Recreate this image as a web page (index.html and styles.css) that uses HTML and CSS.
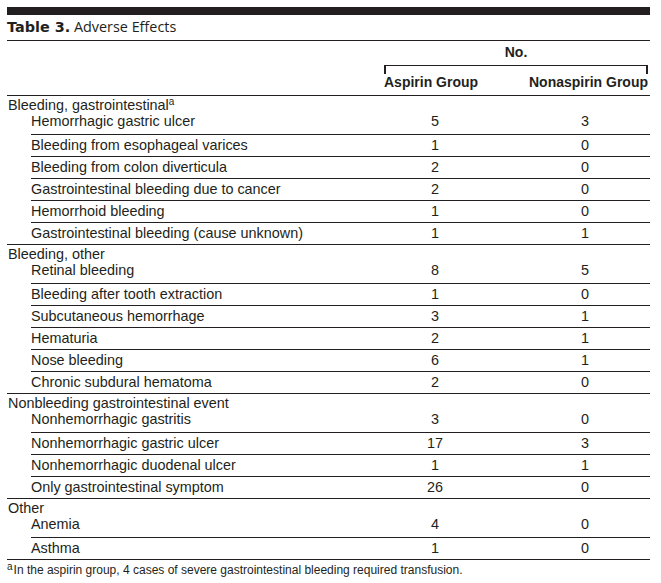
FILE: index.html
```html
<!DOCTYPE html>
<html>
<head>
<meta charset="utf-8">
<link rel="stylesheet" href="styles.css">
</head>
<body>
<div class="page">
  <div class="bar"></div>
  <div class="title"><span class="tnum">Table 3.</span> Adverse Effects</div>
  <div class="thead">
    <div class="no">No.</div>
    <div class="bracket"></div>
    <div class="h1">Aspirin Group</div>
    <div class="h2">Nonaspirin Group</div>
  </div>

  <div class="group">
    <div class="cat">Bleeding, gastrointestinal<sup>a</sup></div>
    <div class="row first"><span>Hemorrhagic gastric ulcer</span><span class="n">5</span><span class="n">3</span></div>
    <div class="row"><span>Bleeding from esophageal varices</span><span class="n">1</span><span class="n">0</span></div>
    <div class="row"><span>Bleeding from colon diverticula</span><span class="n">2</span><span class="n">0</span></div>
    <div class="row"><span>Gastrointestinal bleeding due to cancer</span><span class="n">2</span><span class="n">0</span></div>
    <div class="row"><span>Hemorrhoid bleeding</span><span class="n">1</span><span class="n">0</span></div>
    <div class="row"><span>Gastrointestinal bleeding (cause unknown)</span><span class="n">1</span><span class="n">1</span></div>
  </div>

  <div class="group">
    <div class="cat">Bleeding, other</div>
    <div class="row first"><span>Retinal bleeding</span><span class="n">8</span><span class="n">5</span></div>
    <div class="row"><span>Bleeding after tooth extraction</span><span class="n">1</span><span class="n">0</span></div>
    <div class="row"><span>Subcutaneous hemorrhage</span><span class="n">3</span><span class="n">1</span></div>
    <div class="row"><span>Hematuria</span><span class="n">2</span><span class="n">1</span></div>
    <div class="row"><span>Nose bleeding</span><span class="n">6</span><span class="n">1</span></div>
    <div class="row"><span>Chronic subdural hematoma</span><span class="n">2</span><span class="n">0</span></div>
  </div>

  <div class="group">
    <div class="cat">Nonbleeding gastrointestinal event</div>
    <div class="row first"><span>Nonhemorrhagic gastritis</span><span class="n">3</span><span class="n">0</span></div>
    <div class="row"><span>Nonhemorrhagic gastric ulcer</span><span class="n">17</span><span class="n">3</span></div>
    <div class="row"><span>Nonhemorrhagic duodenal ulcer</span><span class="n">1</span><span class="n">1</span></div>
    <div class="row"><span>Only gastrointestinal symptom</span><span class="n">26</span><span class="n">0</span></div>
  </div>

  <div class="group">
    <div class="cat">Other</div>
    <div class="row first"><span>Anemia</span><span class="n">4</span><span class="n">0</span></div>
    <div class="row"><span>Asthma</span><span class="n">1</span><span class="n">0</span></div>
  </div>

  <div class="foot"><sup>a</sup>In the aspirin group, 4 cases of severe gastrointestinal bleeding required transfusion.</div>
</div>
</body>
</html>
```

FILE: styles.css
```css
html, body {
  margin: 0;
  padding: 0;
  background: #ffffff;
}

.page {
  width: 643px;
  margin-left: 7px;
  padding-top: 7px;
  color: #231f20;
  font-family: "Liberation Sans", Arial, sans-serif;
  font-size: 14.4px;
}

.bar {
  height: 8px;
  background: #231f20;
}

.title {
  margin-top: 3px;
  line-height: 18px;
  padding-bottom: 4px;
  border-bottom: 1px solid #231f20;
  font-family: "Open Sans", sans-serif;
  font-size: 14.4px;
}

.tnum {
  font-family: "DejaVu Sans", sans-serif;
  font-weight: bold;
}

.thead {
  display: grid;
  grid-template-columns: 1fr 150px 130px;
  column-gap: 10px;
  padding-top: 3px;
  padding-bottom: 5px;
  border-bottom: 1px solid #231f20;
  font-weight: bold;
  font-size: 14px;
  line-height: 16px;
}

.no {
  grid-column: 2 / 4;
  text-align: center;
  padding: 0 2px 0 24px;
}

.bracket {
  grid-column: 2 / 4;
  margin: 5px 2px 0 24px;
  height: 8px;
  border-top: 1.5px solid #231f20;
  border-left: 2px solid #231f20;
  border-right: 2px solid #231f20;
}

.h1 {
  grid-column: 2;
  padding-left: 24px;
}

.h2 {
  grid-column: 3;
  text-align: right;
  padding-right: 2px;
}

.group {
  border-bottom: 1px solid #231f20;
}

.cat {
  padding-top: 1px;
  line-height: 16px;
  padding-left: 1px;
}

.cat sup {
  font-size: 10px;
  line-height: 0;
  vertical-align: 5px;
}

.row {
  display: grid;
  grid-template-columns: 1fr 150px 130px;
  column-gap: 10px;
  margin-left: 24px;
  line-height: 21px;
  border-bottom: 1px solid #231f20;
}

.row.first {
  line-height: 17px;
  padding-bottom: 4px;
}

.row:last-child {
  border-bottom: none;
}

.n {
  text-align: center;
}

.foot {
  padding-top: 3px;
  font-size: 12px;
  line-height: 15px;
}

.foot sup {
  font-size: 10px;
  line-height: 0;
  vertical-align: 4px;
  margin-right: 1px;
}
```
